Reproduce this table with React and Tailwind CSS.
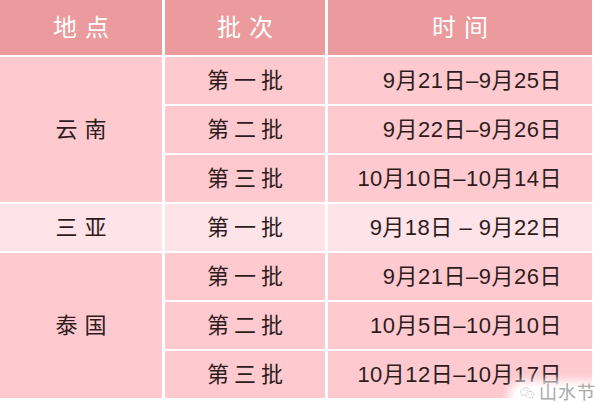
import React from 'react'

const cjk = { fontFamily: '"Liberation Sans", "Noto Sans CJK SC", sans-serif' }

const places = [
  {
    name: '云南',
    light: false,
    batches: [
      ['第一批', '9月21日–9月25日'],
      ['第二批', '9月22日–9月26日'],
      ['第三批', '10月10日–10月14日'],
    ],
  },
  {
    name: '三亚',
    light: true,
    batches: [['第一批', '9月18日 – 9月22日']],
  },
  {
    name: '泰国',
    light: false,
    batches: [
      ['第一批', '9月21日–9月26日'],
      ['第二批', '10月5日–10月10日'],
      ['第三批', '10月12日–10月17日'],
    ],
  },
]

const WeChatMark = () => (
  <svg width="26" height="19" viewBox="0 0 24 18" fill="none" stroke="#c2c2c2" strokeWidth="1">
    {/* big bubble */}
    <path d="M9 1.5c-4.4 0-7.8 2.8-7.8 6.2 0 1.9 1 3.6 2.7 4.7l-.7 2.2 2.6-1.3c1 .3 2 .5 3.2.5" />
    <path d="M16.6 6.8c-.9-3-3.9-5.3-7.6-5.3" />
    <circle cx="6.3" cy="5.6" r="0.9" fill="#c2c2c2" stroke="none" />
    <circle cx="11.6" cy="5.6" r="0.9" fill="#c2c2c2" stroke="none" />
    {/* small bubble */}
    <path d="M16.2 7.2c-3.6 0-6.4 2.3-6.4 5.1s2.8 5.1 6.4 5.1c.8 0 1.6-.1 2.3-.4l2 1-.5-1.7c1.5-1 2.5-2.4 2.5-4 0-2.8-2.8-5.1-6.3-5.1z" />
    <circle cx="14" cy="11.3" r="0.8" fill="#c2c2c2" stroke="none" />
    <circle cx="18.4" cy="11.3" r="0.8" fill="#c2c2c2" stroke="none" />
  </svg>
)

export default function App() {
  return (
    <div className="relative w-[596px] h-[402px] bg-white overflow-hidden" style={cjk}>
      <div className="grid grid-cols-[162px_160px_267px] grid-rows-[55px_repeat(7,47px)] gap-x-[3px] gap-y-[2px]">
        {/* header */}
        <div className="bg-[#eb9a9d] text-white text-[24px] tracking-[8px] pl-[8px] flex items-center justify-center">地点</div>
        <div className="bg-[#eb9a9d] text-white text-[24px] tracking-[8px] pl-[8px] flex items-center justify-center">批次</div>
        <div className="bg-[#eb9a9d] text-white text-[24px] tracking-[8px] pl-[8px] mr-[3px] flex items-center justify-center">时间</div>

        {places.map((p) => {
          const bg = p.light ? 'bg-[#fee4e8]' : 'bg-[#fec9cf]'
          return (
            <React.Fragment key={p.name}>
              <div
                className={`${bg} col-start-1 flex items-center justify-center text-[22px] tracking-[7px] pl-[7px] text-[#2e1c1c] ${
                  p.batches.length === 3 ? 'row-span-3' : 'row-span-1'
                }`}
              >
                {p.name}
              </div>
              {p.batches.map(([b, date]) => (
                <React.Fragment key={b + date}>
                  <div className={`${bg} col-start-2 flex items-center justify-center text-[22px] tracking-[5px] pl-[5px] text-[#2e1c1c]`}>
                    {b}
                  </div>
                  <div className={`${bg} col-start-3 mr-[3px] flex items-center justify-end pr-[30px] text-[22px] leading-none tracking-[0.5px] text-[#2e1c1c]`}>
                    {date}
                  </div>
                </React.Fragment>
              ))}
            </React.Fragment>
          )
        })}
      </div>

      {/* watermark */}
      <div className="absolute right-0 bottom-0 w-[82px] h-[16px] bg-white rounded-tl-[10px] shadow-[0_0_8px_6px_rgba(255,255,255,0.9)] flex items-end gap-[4px] pl-[6px]">
        <WeChatMark />
        <span className="text-[18px] leading-none tracking-[1px] text-[#a8a8a8] whitespace-nowrap">山水节</span>
      </div>
    </div>
  )
}
